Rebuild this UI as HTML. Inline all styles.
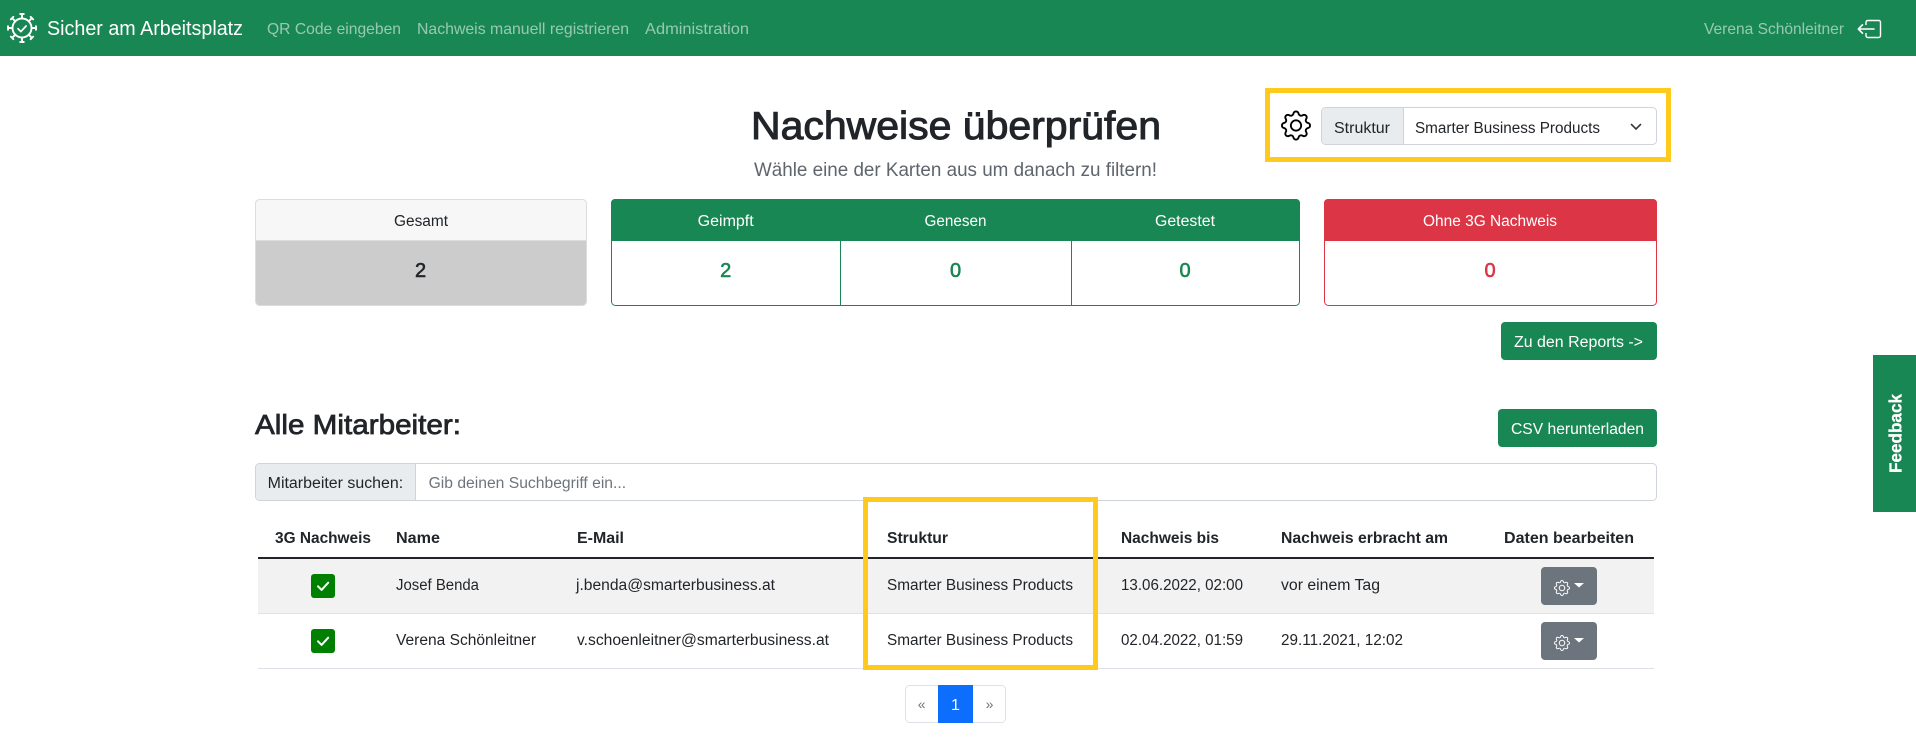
<!DOCTYPE html>
<html lang="de">
<head>
<meta charset="utf-8">
<title>Nachweise überprüfen</title>
<style>
html,body{margin:0;padding:0;background:#fff;width:1916px;height:746px;overflow:hidden}
svg{display:block}
text{font-family:"Liberation Sans",Arial,sans-serif;font-size:15.5px;fill:#212529}
.nav{font-size:16px;fill:#fff;fill-opacity:.55}
.w{fill:#fff}
.th{font-weight:bold;font-size:15.5px}
.num{font-size:20px;text-anchor:middle;stroke-width:.6px}
</style>
</head>
<body>
<svg xmlns="http://www.w3.org/2000/svg" width="1916" height="746" viewBox="0 0 1916 746">
<defs>
<path id="gear" fill-rule="evenodd" d="M8 4.754a3.246 3.246 0 1 0 0 6.492 3.246 3.246 0 0 0 0-6.492zM5.754 8a2.246 2.246 0 1 1 4.492 0 2.246 2.246 0 0 1-4.492 0zM9.796 1.343c-.527-1.79-3.065-1.79-3.592 0l-.094.319a.873.873 0 0 1-1.255.52l-.292-.16c-1.64-.892-3.433.902-2.54 2.541l.159.292a.873.873 0 0 1-.52 1.255l-.319.094c-1.79.527-1.79 3.065 0 3.592l.319.094a.873.873 0 0 1 .52 1.255l-.16.292c-.892 1.64.901 3.434 2.541 2.54l.292-.159a.873.873 0 0 1 1.255.52l.094.319c.527 1.79 3.065 1.79 3.592 0l.094-.319a.873.873 0 0 1 1.255-.52l.292.16c1.64.893 3.434-.902 2.54-2.541l-.159-.292a.873.873 0 0 1 .52-1.255l.319-.094c1.79-.527 1.79-3.065 0-3.592l-.319-.094a.873.873 0 0 1-.52-1.255l.16-.292c.893-1.64-.902-3.433-2.541-2.54l-.292.159a.873.873 0 0 1-1.255-.52l-.094-.319zm-2.633.283c.246-.835 1.428-.835 1.674 0l.094.319a1.873 1.873 0 0 0 2.693 1.115l.291-.16c.764-.415 1.6.42 1.184 1.185l-.159.292a1.873 1.873 0 0 0 1.116 2.692l.318.094c.835.246.835 1.428 0 1.674l-.319.094a1.873 1.873 0 0 0-1.115 2.693l.16.291c.415.764-.42 1.6-1.185 1.184l-.291-.159a1.873 1.873 0 0 0-2.693 1.116l-.094.318c-.246.835-1.428.835-1.674 0l-.094-.319a1.873 1.873 0 0 0-2.692-1.115l-.292.16c-.764.415-1.6-.42-1.184-1.185l.159-.291A1.873 1.873 0 0 0 1.945 8.93l-.319-.094c-.835-.246-.835-1.428 0-1.674l.319-.094A1.873 1.873 0 0 0 3.06 4.377l-.16-.292c-.415-.764.42-1.6 1.185-1.184l.292.159a1.873 1.873 0 0 0 2.692-1.115l.094-.319z"/>
<g id="spoke"><path d="M22 18.5V14.4M20.2 14H23.8" fill="none" stroke="#fff" stroke-width="1.9" stroke-linecap="round"/></g>
</defs>

<!-- Navbar -->
<rect x="0" y="0" width="1916" height="56" fill="#198754"/>
<circle cx="22" cy="28" r="9.5" fill="none" stroke="#fff" stroke-width="1.9"/>
<use href="#spoke"/>
<use href="#spoke" transform="rotate(45 22 28)"/>
<use href="#spoke" transform="rotate(90 22 28)"/>
<use href="#spoke" transform="rotate(135 22 28)"/>
<use href="#spoke" transform="rotate(180 22 28)"/>
<use href="#spoke" transform="rotate(225 22 28)"/>
<use href="#spoke" transform="rotate(270 22 28)"/>
<use href="#spoke" transform="rotate(315 22 28)"/>
<path d="M18 28.7l2.9 2.9 5.2-5.6" fill="none" stroke="#fff" stroke-width="1.7" stroke-linecap="round" stroke-linejoin="round"/>
<text class="w" x="47" y="35" style="font-size:20px" textLength="196" lengthAdjust="spacingAndGlyphs">Sicher am Arbeitsplatz</text>
<text class="nav" x="267" y="34" textLength="134" lengthAdjust="spacingAndGlyphs">QR Code eingeben</text>
<text class="nav" x="417" y="34" textLength="212" lengthAdjust="spacingAndGlyphs">Nachweis manuell registrieren</text>
<text class="nav" x="645" y="34" textLength="104" lengthAdjust="spacingAndGlyphs">Administration</text>
<text class="nav" x="1704" y="34" textLength="140" lengthAdjust="spacingAndGlyphs">Verena Schönleitner</text>
<path d="M1866 25V22.2a1.7 1.7 0 0 1 1.7-1.7H1878.8a1.7 1.7 0 0 1 1.7 1.7V35.8a1.7 1.7 0 0 1-1.7 1.7H1867.7a1.7 1.7 0 0 1-1.7-1.7V33" fill="none" stroke="#fff" stroke-width="1.4"/>
<path d="M1874 29H1858.5M1862.5 24.8L1858.3 29L1862.5 33.2" fill="none" stroke="#fff" stroke-width="1.6" stroke-linecap="round" stroke-linejoin="round"/>

<!-- Title -->
<text x="751" y="139" style="font-size:39px;stroke:#212529;stroke-width:1px" textLength="410" lengthAdjust="spacingAndGlyphs">Nachweise überprüfen</text>
<text x="754" y="176" style="font-size:19.5px;fill:#5e656c" textLength="403" lengthAdjust="spacingAndGlyphs">Wähle eine der Karten aus um danach zu filtern!</text>

<!-- Struktur selector -->
<use href="#gear" transform="translate(1281 110.5) scale(1.875)" fill="#000"/>
<rect x="1321.5" y="107.5" width="335" height="37" rx="4" fill="#fff" stroke="#ced4da"/>
<path d="M1403 108H1325.5a3.5 3.5 0 0 0-3.5 3.5V140.5a3.5 3.5 0 0 0 3.5 3.5H1403z" fill="#e9ecef"/>
<path d="M1403.5 107.5V144.5" stroke="#ced4da"/>
<text x="1334" y="133" textLength="56" lengthAdjust="spacingAndGlyphs">Struktur</text>
<text x="1415" y="133" textLength="185" lengthAdjust="spacingAndGlyphs">Smarter Business Products</text>
<path d="M1631.5 124.5l4.5 4.5 4.5-4.5" fill="none" stroke="#343a40" stroke-width="1.6" stroke-linecap="round" stroke-linejoin="round"/>

<!-- Gesamt card -->
<rect x="255.5" y="199.5" width="331" height="106" rx="4" fill="#ccc" stroke="#dcdcdc"/>
<path d="M256 241V203.5a3.5 3.5 0 0 1 3.5-3.5H582.5a3.5 3.5 0 0 1 3.5 3.5V241z" fill="#f7f7f7"/>
<path d="M256 240.5H586" stroke="#dcdcdc"/>
<text x="394" y="226" textLength="54" lengthAdjust="spacingAndGlyphs">Gesamt</text>
<text class="num" x="420.5" y="277" style="stroke:#212529">2</text>

<!-- Green card -->
<rect x="611.5" y="199.5" width="688" height="106" rx="4" fill="#fff" stroke="#198754"/>
<path d="M611 241V203a4 4 0 0 1 4-4H1296a4 4 0 0 1 4 4V241z" fill="#198754"/>
<path d="M840.5 241V306M1071.5 241V306" stroke="#198754"/>
<text class="w" x="697.7" y="226" textLength="56" lengthAdjust="spacingAndGlyphs">Geimpft</text>
<text class="w" x="924.5" y="226" textLength="62" lengthAdjust="spacingAndGlyphs">Genesen</text>
<text class="w" x="1155" y="226" textLength="60" lengthAdjust="spacingAndGlyphs">Getestet</text>
<text class="num" x="725.7" y="277" style="fill:#198754;stroke:#198754">2</text>
<text class="num" x="955.5" y="277" style="fill:#198754;stroke:#198754">0</text>
<text class="num" x="1185" y="277" style="fill:#198754;stroke:#198754">0</text>

<!-- Red card -->
<rect x="1324.5" y="199.5" width="332" height="106" rx="4" fill="#fff" stroke="#dc3545"/>
<path d="M1324 241V203a4 4 0 0 1 4-4H1653a4 4 0 0 1 4 4V241z" fill="#dc3545"/>
<text class="w" x="1423" y="226" textLength="134" lengthAdjust="spacingAndGlyphs">Ohne 3G Nachweis</text>
<text class="num" x="1490" y="277" style="fill:#dc3545;stroke:#dc3545">0</text>

<!-- Reports button -->
<rect x="1501" y="322" width="156" height="38" rx="4" fill="#198754"/>
<text class="w" x="1514" y="347" textLength="129" lengthAdjust="spacingAndGlyphs">Zu den Reports -&gt;</text>

<!-- Heading + CSV -->
<text x="255" y="434" style="font-size:27.5px;stroke:#212529;stroke-width:.75px" textLength="206" lengthAdjust="spacingAndGlyphs">Alle Mitarbeiter:</text>
<rect x="1498" y="409" width="159" height="38" rx="4" fill="#198754"/>
<text class="w" x="1511" y="434" textLength="133" lengthAdjust="spacingAndGlyphs">CSV herunterladen</text>

<!-- Search -->
<rect x="255.5" y="463.5" width="1401" height="37" rx="4" fill="#fff" stroke="#ced4da"/>
<path d="M415 464H259.5a3.5 3.5 0 0 0-3.5 3.5V496.5a3.5 3.5 0 0 0 3.5 3.5H415z" fill="#e9ecef"/>
<path d="M415.5 463.5V500.5" stroke="#ced4da"/>
<text x="267.7" y="488" textLength="135.5" lengthAdjust="spacingAndGlyphs">Mitarbeiter suchen:</text>
<text x="428.6" y="488" style="fill:#6c757d" textLength="197.5" lengthAdjust="spacingAndGlyphs">Gib deinen Suchbegriff ein...</text>

<!-- Table -->
<rect x="258" y="559" width="1396" height="54" fill="#f2f2f2"/>
<rect x="258" y="557" width="1396" height="2" fill="#212529"/>
<rect x="258" y="613" width="1396" height="1" fill="#dee2e6"/>
<rect x="258" y="668" width="1396" height="1" fill="#dee2e6"/>

<text class="th" x="275" y="543" textLength="96" lengthAdjust="spacingAndGlyphs">3G Nachweis</text>
<text class="th" x="396" y="543" textLength="44" lengthAdjust="spacingAndGlyphs">Name</text>
<text class="th" x="577" y="543" textLength="47" lengthAdjust="spacingAndGlyphs">E-Mail</text>
<text class="th" x="887" y="543" textLength="61" lengthAdjust="spacingAndGlyphs">Struktur</text>
<text class="th" x="1121" y="543" textLength="98" lengthAdjust="spacingAndGlyphs">Nachweis bis</text>
<text class="th" x="1281" y="543" textLength="167" lengthAdjust="spacingAndGlyphs">Nachweis erbracht am</text>
<text class="th" x="1504" y="543" textLength="130" lengthAdjust="spacingAndGlyphs">Daten bearbeiten</text>

<!-- Row 1 -->
<rect x="311" y="574" width="24" height="24" rx="3" fill="#008000"/>
<path d="M318 586.3l3.6 3.6 6.6-7.2" fill="none" stroke="#fff" stroke-width="2" stroke-linecap="round" stroke-linejoin="round"/>
<text x="396" y="590" textLength="83" lengthAdjust="spacingAndGlyphs">Josef Benda</text>
<text x="576" y="590" textLength="199" lengthAdjust="spacingAndGlyphs">j.benda@smarterbusiness.at</text>
<text x="887" y="590" textLength="186" lengthAdjust="spacingAndGlyphs">Smarter Business Products</text>
<text x="1121" y="590" textLength="122" lengthAdjust="spacingAndGlyphs">13.06.2022, 02:00</text>
<text x="1281" y="590" textLength="99" lengthAdjust="spacingAndGlyphs">vor einem Tag</text>
<rect x="1541" y="567" width="56" height="38" rx="4" fill="#6c757d"/>
<use href="#gear" transform="translate(1554 580)" fill="#fff"/>
<path d="M1574 583H1584L1579 587.5z" fill="#fff"/>

<!-- Row 2 -->
<rect x="311" y="629" width="24" height="24" rx="3" fill="#008000"/>
<path d="M318 641.3l3.6 3.6 6.6-7.2" fill="none" stroke="#fff" stroke-width="2" stroke-linecap="round" stroke-linejoin="round"/>
<text x="396" y="645" textLength="140" lengthAdjust="spacingAndGlyphs">Verena Schönleitner</text>
<text x="577" y="645" textLength="252" lengthAdjust="spacingAndGlyphs">v.schoenleitner@smarterbusiness.at</text>
<text x="887" y="645" textLength="186" lengthAdjust="spacingAndGlyphs">Smarter Business Products</text>
<text x="1121" y="645" textLength="122" lengthAdjust="spacingAndGlyphs">02.04.2022, 01:59</text>
<text x="1281" y="645" textLength="122" lengthAdjust="spacingAndGlyphs">29.11.2021, 12:02</text>
<rect x="1541" y="622" width="56" height="38" rx="4" fill="#6c757d"/>
<use href="#gear" transform="translate(1554 635)" fill="#fff"/>
<path d="M1574 638H1584L1579 642.5z" fill="#fff"/>

<!-- Pagination -->
<rect x="905.5" y="685.5" width="100" height="37" rx="4" fill="#fff" stroke="#dee2e6"/>
<rect x="938" y="685" width="35" height="38" fill="#0d6efd"/>
<text x="921.6" y="709" style="font-size:14px;fill:#6c757d;text-anchor:middle">«</text>
<text x="955.5" y="710" style="font-size:16px;fill:#fff;text-anchor:middle">1</text>
<text x="989.5" y="709" style="font-size:14px;fill:#6c757d;text-anchor:middle">»</text>

<!-- Highlights -->
<rect x="1267.5" y="90.5" width="401" height="69" fill="none" stroke="#ffca1c" stroke-width="5"/>
<rect x="865.5" y="499.5" width="230" height="168" fill="none" stroke="#ffca1c" stroke-width="5"/>

<!-- Feedback tab -->
<rect x="1873" y="355" width="43" height="157" fill="#198754"/>
<text class="w" transform="translate(1901.5 473) rotate(-90)" style="font-size:17.5px;font-weight:bold;stroke:#fff;stroke-width:.25px" textLength="79" lengthAdjust="spacingAndGlyphs">Feedback</text>
</svg>
</body>
</html>
